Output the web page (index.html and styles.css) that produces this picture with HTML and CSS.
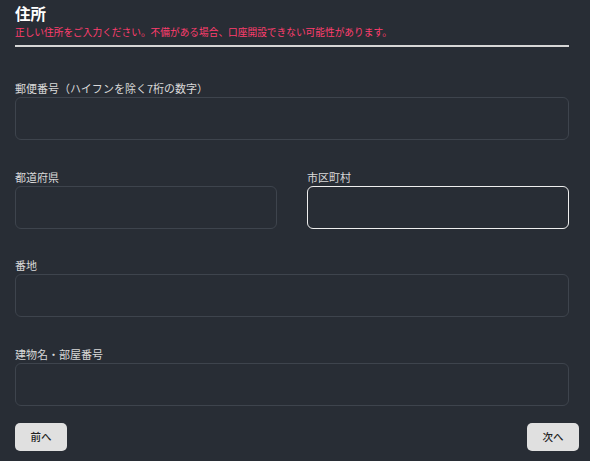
FILE: index.html
```html
<!DOCTYPE html>
<html lang="ja">
<head>
<meta charset="utf-8">
<link rel="stylesheet" href="styles.css">
</head>
<body>
<div class="page">
  <div class="form">
    <h1 class="title">住所</h1>
    <p class="notice">正しい住所をご入力ください。不備がある場合、口座開設できない可能性があります。</p>
    <div class="rule"></div>
    <div class="field">
      <label class="label">郵便番号（ハイフンを除く7桁の数字）</label>
      <div class="input"></div>
    </div>
    <div class="row">
      <div class="field">
        <label class="label">都道府県</label>
        <div class="input"></div>
      </div>
      <div class="field">
        <label class="label">市区町村</label>
        <div class="input focused"></div>
      </div>
    </div>
    <div class="field">
      <label class="label">番地</label>
      <div class="input"></div>
    </div>
    <div class="field">
      <label class="label">建物名・部屋番号</label>
      <div class="input"></div>
    </div>
  </div>
  <div class="actions">
    <button class="btn">前へ</button>
    <button class="btn">次へ</button>
  </div>
</div>
</body>
</html>
```
FILE: styles.css
```css
html, body {
  margin: 0;
  padding: 0;
  background: #282d35;
}
body {
  font-family: "Noto Sans CJK JP", "Noto Sans", sans-serif;
  width: 590px;
  height: 461px;
  overflow: hidden;
}
.page {
  padding-top: 3px;
}
.form {
  padding: 0 21px 0 15px;
}
.title {
  margin: 0;
  font-size: 15.5px;
  line-height: 20px;
  font-weight: 700;
  color: #ffffff;
}
.notice {
  margin: 3px 0 0 0;
  font-size: 9.7px;
  line-height: 13px;
  color: #ff3d6e;
}
.rule {
  margin-top: 6px;
  height: 2px;
  background: #d6d6d6;
}
.field {
  margin-top: 34px;
  display: flex;
  flex-direction: column;
}
.row .field {
  margin-top: 0;
}
.form > .field ~ .field,
.row {
  margin-top: 29.5px;
}
.row {
  display: grid;
  grid-template-columns: 1fr 1fr;
  column-gap: 30px;
}
.label {
  font-size: 11px;
  line-height: 14px;
  color: #d9d9d9;
  margin-bottom: 2px;
}
.input {
  height: 41px;
  border: 1px solid #3e444d;
  border-radius: 6px;
  background: #282d35;
}
.input.focused {
  border-color: #eeeeee;
}
.actions {
  display: flex;
  justify-content: space-between;
  padding: 0 11px 0 15px;
  margin-top: 17px;
}
.btn {
  width: 52px;
  height: 28px;
  border: 0;
  border-radius: 5px;
  background: #e0e0e0;
  color: #222222;
  font-family: "Noto Sans CJK JP", sans-serif;
  font-size: 10.5px;
  font-weight: 500;
  padding: 0;
}
```
